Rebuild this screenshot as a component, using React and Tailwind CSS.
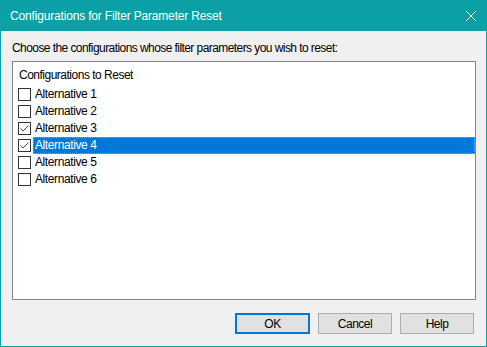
import React, { useState } from 'react';

const items = [
  { id: 1, label: 'Alternative 1', checked: false },
  { id: 2, label: 'Alternative 2', checked: false },
  { id: 3, label: 'Alternative 3', checked: true },
  { id: 4, label: 'Alternative 4', checked: true },
  { id: 5, label: 'Alternative 5', checked: false },
  { id: 6, label: 'Alternative 6', checked: false },
];

const CheckBox = ({ checked }) => (
  <div className="w-[13px] h-[13px] border border-[#333333] bg-white flex items-center justify-center shrink-0">
    {checked && (
      <svg width="11" height="11" viewBox="0 0 11 11">
        <path d="M1.5 5.5 L4 8 L9.5 2.5" fill="none" stroke="#444444" strokeWidth="1" />
      </svg>
    )}
  </div>
);

const App = () => {
  const [rows, setRows] = useState(items);
  const [selected, setSelected] = useState(4);

  const toggle = (id) => {
    setRows(rows.map((r) => (r.id === id ? { ...r, checked: !r.checked } : r)));
  };

  return (
    <div className="w-[487px] h-[347px] flex flex-col border border-t-0 border-[#0b9fa6] bg-[#f0f0f0] font-['Liberation_Sans',Arial,sans-serif] text-[12px] tracking-[-0.5px] text-black">
      {/* title bar */}
      <div className="h-[31px] shrink-0 bg-[#0b9fa6] flex items-center justify-between pl-[9px] pr-[9px] text-white">
        <span className="leading-none tracking-[-0.17px]">Configurations for Filter Parameter Reset</span>
        <svg width="12" height="12" viewBox="0 0 12 12">
          <path d="M1 1 L11 11 M11 1 L1 11" stroke="white" strokeWidth="1" />
        </svg>
      </div>

      <div className="flex flex-col flex-1 px-[11px]">
        <p className="mt-[10px] h-[15px] leading-[15px] tracking-[-0.57px]">
          Choose the configurations whose filter parameters you wish to reset:
        </p>

        <div className="mt-[5px] h-[239px] w-[464px] border border-[#828790] bg-white pt-[3px]">
          <div className="h-[21px] leading-[21px] pl-[6px]">Configurations to Reset</div>
          {rows.map((r) => (
            <div
              key={r.id}
              className="h-[17px] flex items-center pl-[5px]"
              onClick={() => setSelected(r.id)}
            >
              <div onClick={() => toggle(r.id)}>
                <CheckBox checked={r.checked} />
              </div>
              <div
                className={
                  r.id === selected
                    ? 'ml-[2px] flex-1 h-[17px] leading-[15px] pl-[1px] tracking-[-0.4px] bg-[#0078d7] text-white border border-dotted border-[#ff8a28]'
                    : 'ml-[2px] flex-1 h-[17px] leading-[17px] pl-[2px] tracking-[-0.4px]'
                }
              >
                {r.label}
              </div>
            </div>
          ))}
        </div>

        <div className="mt-[13px] flex justify-end gap-[8px] pr-[1px]">
          <button className="w-[75px] h-[21px] bg-[#e1e1e1] border-2 border-[#0078d7] leading-none">OK</button>
          <button className="w-[74px] h-[21px] bg-[#e1e1e1] border border-[#adadad] leading-none">Cancel</button>
          <button className="w-[74px] h-[21px] bg-[#e1e1e1] border border-[#adadad] leading-none">Help</button>
        </div>
      </div>
    </div>
  );
};

export default App;
